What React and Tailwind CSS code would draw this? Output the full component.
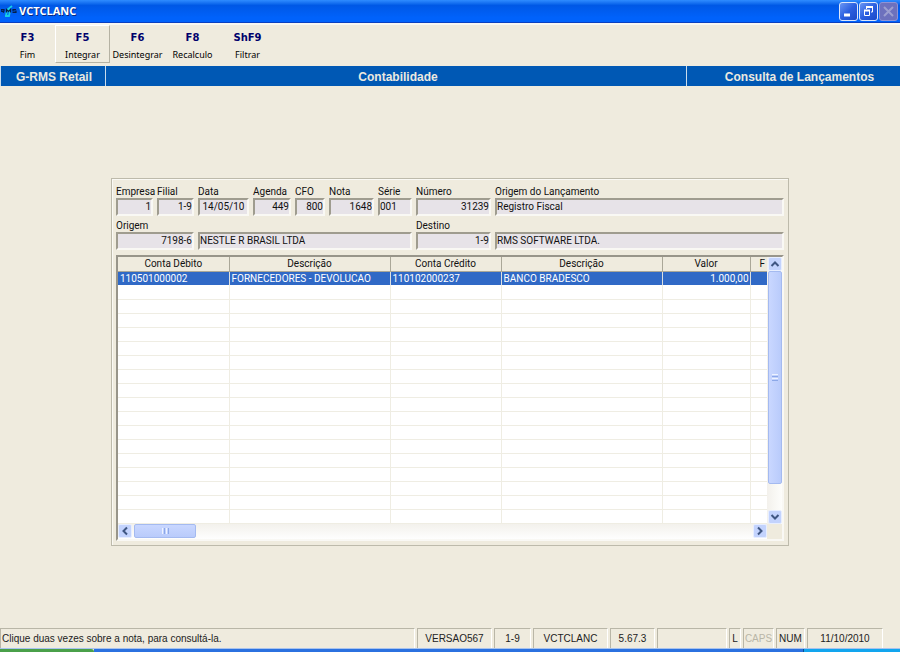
import clsx from 'clsx';

const tools = [
    { key: 'F3', label: 'Fim' },
    { key: 'F5', label: 'Integrar', raised: true },
    { key: 'F6', label: 'Desintegrar' },
    { key: 'F8', label: 'Recalculo' },
    { key: 'ShF9', label: 'Filtrar' },
];

const fields = [
    { id: 'empresa', label: 'Empresa', value: '1', align: 'text-right' },
    { id: 'filial', label: 'Filial', value: '1-9', align: 'text-right' },
    { id: 'data', label: 'Data', value: '14/05/10', align: 'text-center' },
    { id: 'agenda', label: 'Agenda', value: '449', align: 'text-right' },
    { id: 'cfo', label: 'CFO', value: '800', align: 'text-right' },
    { id: 'nota', label: 'Nota', value: '1648', align: 'text-right' },
    { id: 'serie', label: 'Série', value: '001' },
    { id: 'numero', label: 'Número', value: '31239', align: 'text-right' },
    { id: 'lancamento', label: 'Origem do Lançamento', value: 'Registro Fiscal' },
    { id: 'origem', label: 'Origem', value: '7198-6', align: 'text-right', span: 'col-span-2' },
    { id: 'origem-nome', hint: 'Nome da origem', value: 'NESTLE R BRASIL LTDA', span: 'col-span-5' },
    { id: 'destino', label: 'Destino', value: '1-9', align: 'text-right' },
    { id: 'destino-nome', hint: 'Nome do destino', value: 'RMS SOFTWARE LTDA.' },
];

const columns = [
    { title: 'Conta Débito', width: 'w-[111px]' },
    { title: 'Descrição', width: 'w-[161px]' },
    { title: 'Conta Crédito', width: 'w-[111px]' },
    { title: 'Descrição', width: 'w-[161px]' },
    { title: 'Valor', width: 'w-[88px]' },
    { title: 'F', width: '' },
];

const entry = ['110501000002', 'FORNECEDORES - DEVOLUCAO', '110102000237', 'BANCO BRADESCO', '1.000,00', ''];

const status = [
    { text: 'VERSAO567', width: 'w-[75px]' },
    { text: '1-9', width: 'w-[37px]' },
    { text: 'VCTCLANC', width: 'w-[75px]' },
    { text: '5.67.3', width: 'w-[45px]' },
    { text: '', width: 'w-[70px]' },
    { text: 'L', width: 'w-3' },
    { text: 'CAPS', width: 'w-[31px]', off: true },
    { text: 'NUM', width: 'w-[29px]' },
    { text: '11/10/2010', width: 'w-[76px]' },
];

function Logo() {
    return (
        <svg width="16" height="16" viewBox="0 0 16 16" aria-hidden="true">
            <path d="M5 13l1-6 5-4M5 8l4-1M4 13h4l1-5" stroke="#17cfe6" strokeWidth="1.800" fill="none" />
            <path d="M0 9V6.500h3V8H1l2 1.500M5.500 9.500V6.500l2 2 2-2v3M15 6.500h-3V8h3v1.500h-3.500" stroke="#04204a" strokeWidth="1.200" fill="none" />
        </svg>
    );
}

function WindowButton({ label, disabled, children }) {
    return (
        <button
            aria-label={label}
            disabled={disabled}
            className={clsx(
                'flex h-[19px] w-[19px] items-center justify-center rounded-[3px] border',
                disabled
                    ? 'border-[#8f93d4] bg-[#6d71bd]'
                    : 'border-[#dbe6fb] bg-linear-to-br from-[#6a95f3] via-[#2b5fe0] to-[#1a49c8]'
            )}
        >
            <svg width="17" height="17" viewBox="0 0 17 17" fill="none" aria-hidden="true">{children}</svg>
        </button>
    );
}

function TitleBar() {
    return (
        <header className="flex h-[23px] items-center gap-0.5 border-b border-[#0a3fc0] bg-linear-to-b from-[#2f8cff] via-[#0058e6] via-25% to-[#0062fb] to-80% pr-0.5 pl-px">
            <Logo />
            <h1 className="font-['Open_Sans',sans-serif] text-[11px] font-bold text-white [text-shadow:1px_1px_#0a2a80]">VCTCLANC</h1>
            <div className="ml-auto flex gap-px">
                <WindowButton label="Minimizar">
                    <path d="M4 12h6" stroke="#fff" strokeWidth="3" />
                </WindowButton>
                <WindowButton label="Restaurar">
                    <path d="M6.500 6V4h6v5H11" stroke="#fff" />
                    <path d="M6 4h7" stroke="#fff" strokeWidth="2" />
                    <path d="M4.500 7.500h5v5h-5z" stroke="#fff" />
                    <path d="M4 7.500h6" stroke="#fff" strokeWidth="2" />
                </WindowButton>
                <WindowButton label="Fechar" disabled>
                    <path d="M4 4l9 9M13 4l-9 9" stroke="#9c9fd0" strokeWidth="2" />
                </WindowButton>
            </div>
        </header>
    );
}

function Toolbar() {
    return (
        <nav className="flex h-[43px] border-t-2 border-[#f8f7f2] font-['Noto_Sans',sans-serif]">
            {tools.map((tool) => (
                <button
                    key={tool.key}
                    className={clsx(
                        'flex h-[38px] w-[55px] flex-col items-center gap-[5px] border pt-1.5 whitespace-nowrap',
                        tool.raised ? 'border-t-white border-r-[#b5b2a3] border-b-[#b5b2a3] border-l-white' : 'border-transparent'
                    )}
                >
                    <span className="font-['DejaVu_Sans',sans-serif] text-[10px] leading-3 font-bold text-[#00006c]">{tool.key}</span>
                    <span className="text-[9px] leading-3 text-black">{tool.label}</span>
                </button>
            ))}
        </nav>
    );
}

function Banner() {
    return (
        <div className="flex h-5 bg-[#0058b4] text-center text-[12px] leading-[22px] font-bold text-[#ece9e0]">
            <div className="w-[106px] border-x border-[#c9dcec] pl-0.5">G-RMS Retail</div>
            <div className="flex-1 border-r border-[#c9dcec] pl-1">Contabilidade</div>
            <div className="w-[213px] pl-3">Consulta de Lançamentos</div>
        </div>
    );
}

function Field({ id, label, hint, value, align, span }) {
    return (
        <div className={clsx('flex min-w-0 flex-col', span)}>
            <label htmlFor={id} className="h-[13px] leading-[14px] whitespace-nowrap">{label}</label>
            <input
                id={id}
                readOnly
                aria-label={hint}
                defaultValue={value}
                className={clsx(
                    'h-[18px] w-full border-2 border-t-[#9f9c8f] border-r-[#f9f8f4] border-b-[#f9f8f4] border-l-[#9f9c8f] bg-[#e7e3e8] pb-0.5 leading-3 outline-none',
                    align
                )}
            />
        </div>
    );
}

function Arrow({ label, path }) {
    return (
        <button aria-label={label} className="flex h-3.5 w-3.5 shrink-0 items-center justify-center rounded-[2px] border border-[#e7eeff] bg-[#c3d3fd]">
            <svg width="10" height="10" viewBox="0 0 10 10" fill="none" aria-hidden="true">
                <path d={path} stroke="#3f5682" strokeWidth="2" />
            </svg>
        </button>
    );
}

function Grid() {
    return (
        <div className="grid grid-cols-[1fr_15px] border-2 border-t-[#98958a] border-r-[#f9f8f4] border-b-[#f9f8f4] border-l-[#98958a] bg-[#efebde]">
            <table className="w-full table-fixed border-collapse bg-white">
                <thead>
                    <tr className="h-3.5 bg-[#efebde]">
                        {columns.map((column, i) => (
                            <th
                                key={i}
                                className={clsx(
                                    'border-b border-[#aaa798] p-0 leading-[13px] font-normal',
                                    column.width,
                                    i < 5 ? 'border-r' : 'pr-0.5 text-right'
                                )}
                            >
                                {column.title}
                            </th>
                        ))}
                    </tr>
                </thead>
                <tbody>
                    <tr className="h-3.5 bg-[#3069c6] text-white">
                        {entry.map((text, i) => (
                            <td
                                key={i}
                                className={clsx(
                                    'overflow-hidden p-0 leading-[13px] whitespace-nowrap',
                                    i === 4 ? 'pr-px text-right' : 'pl-0.5',
                                    i < 5 && 'border-r border-[#dcdfe0]'
                                )}
                            >
                                {text}
                            </td>
                        ))}
                    </tr>
                    {Array.from({ length: 17 }, (_, row) => (
                        <tr key={row} className="h-3.5">
                            {columns.map((_, i) => (
                                <td key={i} className={clsx('border-b border-[#efede3] p-0', i < 5 && 'border-r')} />
                            ))}
                        </tr>
                    ))}
                </tbody>
            </table>
            <div className="flex flex-col items-center bg-linear-to-r from-[#f3f1ec] to-[#fdfdfb]">
                <Arrow label="Para cima" path="M1.500 7L5 3.500 8.500 7" />
                <div className="flex w-3.5 flex-1 flex-col items-center justify-center gap-px rounded-[2px] border border-[#a4baf0] bg-linear-to-r from-[#c9d7ff] to-[#b9cbfb]">
                    <i className="h-px w-1.5 bg-[#eef3ff]" />
                    <i className="h-px w-1.5 bg-[#8ca8e8]" />
                    <i className="h-px w-1.5 bg-[#eef3ff]" />
                    <i className="h-px w-1.5 bg-[#8ca8e8]" />
                </div>
                <div className="h-[26px]" />
                <Arrow label="Para baixo" path="M1.500 3L5 6.500 8.500 3" />
            </div>
            <div className="flex h-[15px] items-center bg-linear-to-b from-[#f3f1ec] to-[#fefefe]">
                <Arrow label="Para a esquerda" path="M7 1.500L3.500 5 7 8.500" />
                <div className="ml-0.5 flex h-3.5 w-[62px] items-center justify-center gap-px rounded-[2px] border border-[#a4baf0] bg-linear-to-b from-[#c9d7ff] to-[#b9cbfb]">
                    <i className="h-1.5 w-px bg-[#eef3ff]" />
                    <i className="h-1.5 w-px bg-[#8ca8e8]" />
                    <i className="h-1.5 w-px bg-[#eef3ff]" />
                    <i className="h-1.5 w-px bg-[#8ca8e8]" />
                </div>
                <div className="flex-1" />
                <Arrow label="Para a direita" path="M3 1.500L6.500 5 3 8.500" />
            </div>
        </div>
    );
}

function StatusBar() {
    return (
        <footer className="flex h-5 gap-0.5 text-[10px] leading-[19px] text-[#222]">
            <div className="min-w-0 flex-1 truncate border-t border-r border-l border-t-[#b9b6a7] border-r-white border-l-[#b9b6a7] pl-px">
                Clique duas vezes sobre a nota, para consultá-la.
            </div>
            {status.map((item, i) => (
                <div
                    key={i}
                    className={clsx(
                        'border border-b-0 border-t-[#b9b6a7] border-r-white border-l-[#b9b6a7] text-center whitespace-nowrap',
                        item.width,
                        item.off && 'text-[#b9b6a7]'
                    )}
                >
                    {item.text}
                </div>
            ))}
            <div className="w-[15px]" />
        </footer>
    );
}

export default function App() {
    return (
        <div className="flex min-h-screen flex-col bg-[#efebde] font-['Liberation_Sans',Arial,sans-serif]">
            <TitleBar />
            <Toolbar />
            <Banner />
            <main className="flex-1 px-[111px] pt-[92px] pb-10 font-['Roboto',sans-serif] text-[10px] text-[#111]">
                <section className="border border-[#bdbaab] p-1 pt-1.5 shadow-[inset_1px_1px_#faf9f4]">
                    <form className="grid grid-cols-[37px_37px_51px_38px_30px_45px_34px_75px_1fr] gap-x-1 gap-y-[3px]">
                        {fields.map((field) => (
                            <Field key={field.id} {...field} />
                        ))}
                    </form>
                    <div className="mt-[5px]">
                        <Grid />
                    </div>
                </section>
            </main>
            <StatusBar />
            <div className="flex h-1 border-t border-[#a9c3ee]">
                <div className="w-[94px] rounded-tr-sm bg-[#4aa04a]" />
                <div className="flex-1 bg-[#2b71e0]" />
                <div className="w-[97px] border-l border-[#0b4f8f] bg-[#12a5ee]" />
            </div>
        </div>
    );
}
